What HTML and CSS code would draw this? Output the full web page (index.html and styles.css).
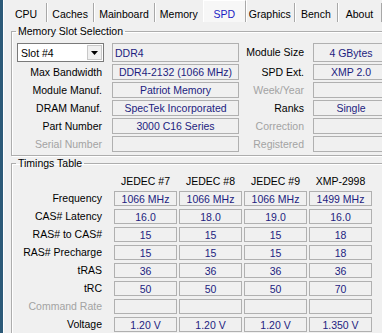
FILE: index.html
```html
<!DOCTYPE html>
<html>
<head>
<meta name="viewport" content="width=device-width, initial-scale=1">
<link rel="stylesheet" href="styles.css">
</head>
<body>
<div class="window">
  <div class="tabs">
    <div class="tab t-cpu">CPU</div>
    <div class="tab t-caches">Caches</div>
    <div class="tab t-mainboard">Mainboard</div>
    <div class="tab t-memory">Memory</div>
    <div class="tab t-spd selected">SPD</div>
    <div class="tab t-graphics">Graphics</div>
    <div class="tab t-bench">Bench</div>
    <div class="tab t-about">About</div>
  </div>

  <div class="page">
    <fieldset class="group">
      <legend>Memory Slot Selection</legend>
      <div class="slot-grid">
        <div class="select">
          <span>Slot #4</span>
          <span class="drop"><svg width="7" height="4" viewBox="0 0 7 4"><polygon points="0,0 7,0 3.5,4" fill="#000"/></svg></span>
        </div>
        <div class="box left">DDR4</div>
        <div class="label">Module Size</div>
        <div class="box">4 GBytes</div>

        <div class="label">Max Bandwidth</div>
        <div class="box">DDR4-2132 (1066 MHz)</div>
        <div class="label">SPD Ext.</div>
        <div class="box">XMP 2.0</div>

        <div class="label">Module Manuf.</div>
        <div class="box">Patriot Memory</div>
        <div class="label off">Week/Year</div>
        <div class="box"></div>

        <div class="label">DRAM Manuf.</div>
        <div class="box">SpecTek Incorporated</div>
        <div class="label">Ranks</div>
        <div class="box">Single</div>

        <div class="label">Part Number</div>
        <div class="box">3000 C16 Series</div>
        <div class="label off">Correction</div>
        <div class="box"></div>

        <div class="label off">Serial Number</div>
        <div class="box"></div>
        <div class="label off">Registered</div>
        <div class="box"></div>
      </div>
    </fieldset>

    <fieldset class="group">
      <legend>Timings Table</legend>
      <div class="timing-grid">
        <div></div>
        <div class="head">JEDEC #7</div>
        <div class="head">JEDEC #8</div>
        <div class="head">JEDEC #9</div>
        <div class="head">XMP-2998</div>

        <div class="label">Frequency</div>
        <div class="box">1066 MHz</div>
        <div class="box">1066 MHz</div>
        <div class="box">1066 MHz</div>
        <div class="box">1499 MHz</div>

        <div class="label">CAS# Latency</div>
        <div class="box">16.0</div>
        <div class="box">18.0</div>
        <div class="box">19.0</div>
        <div class="box">16.0</div>

        <div class="label">RAS# to CAS#</div>
        <div class="box">15</div>
        <div class="box">15</div>
        <div class="box">15</div>
        <div class="box">18</div>

        <div class="label">RAS# Precharge</div>
        <div class="box">15</div>
        <div class="box">15</div>
        <div class="box">15</div>
        <div class="box">18</div>

        <div class="label">tRAS</div>
        <div class="box">36</div>
        <div class="box">36</div>
        <div class="box">36</div>
        <div class="box">36</div>

        <div class="label">tRC</div>
        <div class="box">50</div>
        <div class="box">50</div>
        <div class="box">50</div>
        <div class="box">70</div>

        <div class="label off">Command Rate</div>
        <div class="box"></div>
        <div class="box"></div>
        <div class="box"></div>
        <div class="box"></div>

        <div class="label">Voltage</div>
        <div class="box">1.20 V</div>
        <div class="box">1.20 V</div>
        <div class="box">1.20 V</div>
        <div class="box">1.350 V</div>
      </div>
    </fieldset>
  </div>
</div>
</body>
</html>
```

FILE: styles.css
```css
body {
    margin: 0;
    background: #f0f0f0;
    font-family: "Liberation Sans", Arial, sans-serif;
    font-size: 10.5px;
    color: #000;
    overflow: hidden;
}

.window {
    height: 333px;
    border-left: 3px solid #2d5a78;
    box-shadow: inset 1px 0 #fff;
}

/* tab strip */
.tabs {
    display: flex;
    height: 22px;
    padding-left: 3px;
}

.tab {
    box-sizing: border-box;
    height: 19px;
    margin-top: 3px;
    padding-top: 5px;
    line-height: 13px;
    text-align: center;
    white-space: nowrap;
    border-right: 1px solid #a8a8a8;
    box-shadow: 1px 0 #fff;
}

.tab.selected {
    height: 22px;
    margin-top: 0;
    padding-top: 7px;
    color: #1c1cc4;
    background: #f7f7f7;
    border-left: 1px solid #fff;
    border-top: 1px solid #fff;
}

.t-cpu {width: 42px;}
.t-caches {width: 48px;}
.t-mainboard {width: 62px;}
.t-memory {width: 49px; border-right: none; box-shadow: none;}
.t-spd {width: 44px;}
.t-graphics {width: 50px;}
.t-bench {width: 44px;}
.t-about {width: 45px;}

/* group boxes */
.page {
    padding: 2px 0 0 8px;
}

.group {
    box-sizing: border-box;
    width: 380px;
    min-width: 0;
    margin: 0;
    padding: 5px 0 3px 0;
    border: 1px solid #adadad;
    box-shadow: inset 1px 1px #fff, 1px 1px #fff;
}

.group legend {
    margin-left: 4px;
    padding: 0 2px;
    line-height: 14px;
}

.slot-grid {
    display: grid;
    grid-template-columns: 100px 127px 74px 76px;
    grid-template-rows: 19px;
    grid-auto-rows: 16px;
    row-gap: 2px;
}

.timing-grid {
    display: grid;
    grid-template-columns: 100px repeat(4, 63px);
    grid-template-rows: 13px;
    grid-auto-rows: 15px;
    column-gap: 2px;
    row-gap: 3px;
}

.label {
    align-self: center;
    text-align: right;
    padding-right: 10px;
    white-space: nowrap;
    line-height: 13px;
}

.slot-grid .label:nth-child(4n+3) {
    padding-right: 9px;
}

.label.off {
    color: #a3a3a3;
}

.head {
    text-align: center;
    line-height: 13px;
    white-space: nowrap;
}

.box {
    display: flex;
    align-items: center;
    justify-content: center;
    border: 1px solid #b0b0b0;
    color: #1d1d80;
    white-space: nowrap;
    overflow: hidden;
}

.box.left {
    justify-content: flex-start;
    padding-left: 2px;
}

/* slot combo box */
.select {
    display: flex;
    align-items: center;
    justify-content: space-between;
    box-sizing: border-box;
    width: 87px;
    margin-left: 5px;
    padding-left: 3px;
    background: #fff;
    border: 1px solid #7a7a7a;
    color: #000;
}

.drop {
    display: flex;
    align-items: center;
    justify-content: center;
    box-sizing: border-box;
    width: 15px;
    height: 15px;
    margin-right: 1px;
    background: #f0f0f0;
    border: 1px solid #c8c8c8;
}
```
